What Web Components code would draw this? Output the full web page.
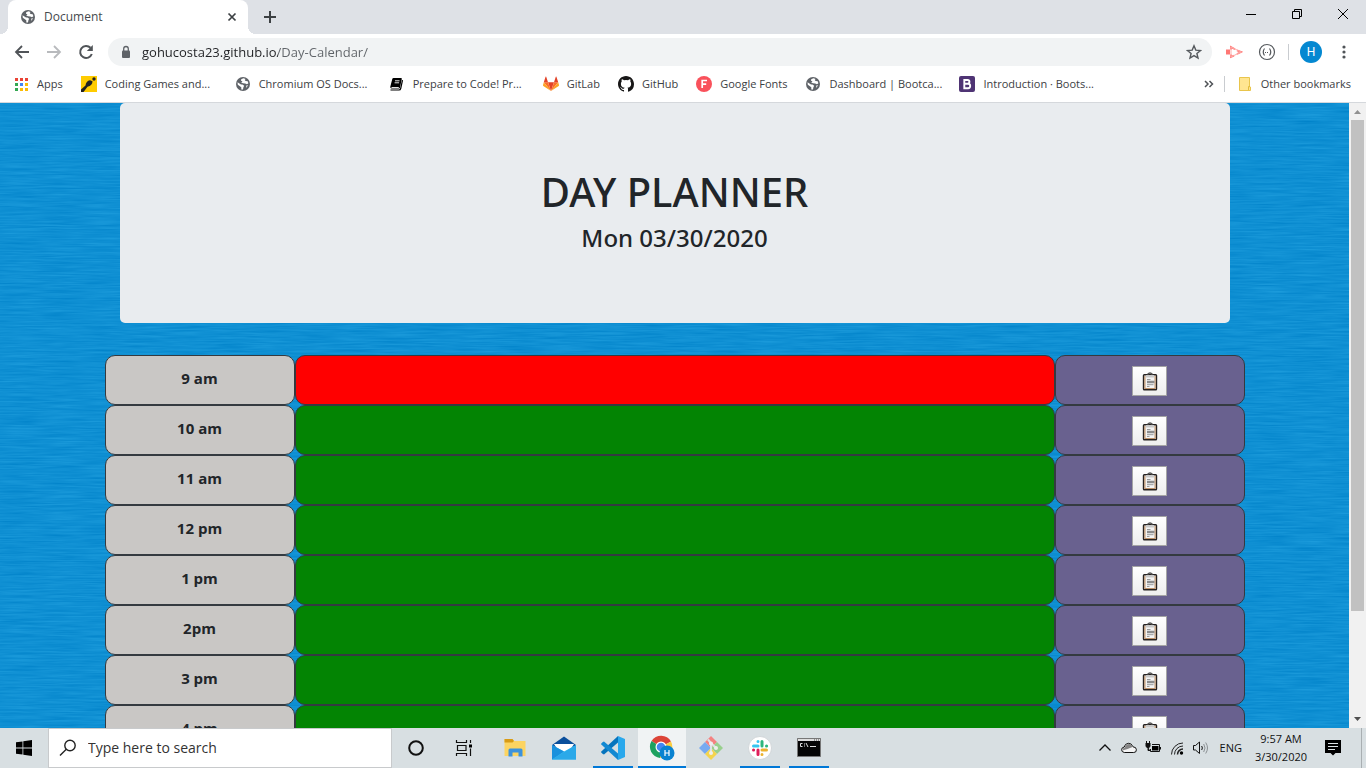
<!DOCTYPE html>
<html lang="en">
<head>
<meta charset="utf-8">
<title>Document</title>
<style>
  html, body { margin: 0; height: 100%; }
  body { font: 12px/16px "Open Sans", "Noto Sans", sans-serif; color: #3c4043; overflow: hidden; }
</style>
</head>
<body>
<desktop-screen></desktop-screen>

<script>
const GLOBE = '<svg width="16" height="16" viewBox="0 0 16 16"><circle cx="8" cy="8" r="7" fill="#5f6368"/><path fill="#fff" d="M2.5 6.3 6 8.6 7.400 8.500 9.200 9.700 8.400 11.200 8 13.500 6.300 13.400 6.300 11.300 2.800 8.700ZM6.200 3.300 8.500 2.300 10.600 2.900 9.700 4 10.600 5 12.700 5.200 13.400 7.300 12 8.300 10.200 7.400 8 7.300 6.200 6.600 7.500 5.300 6 4.700ZM11.300 9.600 13 9.300 11.300 12Z"/></svg>';

const ICONS = {
  globe: GLOBE,
  apps: '<svg width="16" height="16" viewBox="0 0 16 16"><g><path fill="#ea4335" d="M2 2h3v3H2zM7 2h3v3H7zM12 2h3v3h-3z"/><path fill="#34a853" d="M2 7h3v3H2zM2 12h3v3H2z"/><path fill="#4285f4" d="M7 7h3v3H7z"/><path fill="#fbbc05" d="M12 7h3v3h-3zM7 12h3v3H7zM12 12h3v3h-3z"/></g></svg>',
  coding: '<svg width="16" height="16" viewBox="0 0 16 16"><path fill="#fc0" d="M0 0h16v16H0z"/><path fill="#222" d="M0 16V13.500L4.500 9.500Q5 5 9 4.300L11.500 5.200Q11.500 9.500 6.500 10.800L2.500 16z"/><circle cx="13" cy="3" r="1.700" fill="#222"/></svg>',
  book: '<svg width="16" height="16" viewBox="0 0 16 16"><path d="M4.500 2H12q1 0 .8 1L11 11.500q-.2 1-1.200 1H2.500q-1.500 0-1.200-1.800L3.200 3.200Q3.500 2 4.500 2Z"/><path d="M13.500 4.200 11.700 12.500q-.3 1.500-1.700 1.500H1.500" fill="none" stroke="#000" stroke-width="1.200"/><path d="M6 4.800h4.500M5.600 6.800h4.500" fill="none" stroke="#fff" stroke-width=".9"/><path d="M2.500 11.500h7.300" stroke="#fff" stroke-width=".9"/></svg>',
  gitlab: '<svg width="16" height="16" viewBox="0 0 16 16"><path fill="#e24329" d="m8 15 3-8.700H5z"/><path fill="#fc6d26" d="M8 15 5 6.300H.8zM8 15l3-8.700h4.200z"/><path fill="#fca326" d="M.8 6.300 0 9q-.1.600.3.900L8 15zM15.200 6.300 16 9q.1.600-.3.900L8 15z"/><path fill="#e24329" d="M.8 6.300H5L3.200.8q-.3-.5-.6 0zM15.200 6.300H11L12.800.8q.3-.5.600 0z"/></svg>',
  github: '<svg width="16" height="16" viewBox="0 0 16 16"><path fill="#181717" d="M8 0C3.580 0 0 3.580 0 8c0 3.540 2.290 6.530 5.470 7.590.4.070.55-.17.550-.38v-1.330c-2.230.48-2.700-1.070-2.700-1.070-.36-.92-.89-1.170-.89-1.170-.73-.5.060-.49.060-.49.800.060 1.230.83 1.230.83.710 1.220 1.870.87 2.330.67.070-.52.280-.87.510-1.070-1.780-.2-3.640-.89-3.640-3.950 0-.87.310-1.590.82-2.150-.08-.2-.36-1.020.08-2.120 0 0 .67-.21 2.200.82a7.600 7.600 0 0 1 4 0c1.530-1.040 2.200-.82 2.200-.82.440 1.100.16 1.920.08 2.120.51.560.82 1.270.82 2.150 0 3.070-1.870 3.750-3.650 3.950.29.250.54.730.54 1.480v2.190c0 .21.150.46.550.38A8 8 0 0 0 16 8c0-4.420-3.580-8-8-8Z"/></svg>',
  fonts: '<svg width="16" height="16" viewBox="0 0 16 16"><circle cx="8" cy="8" r="8" fill="#f9515b"/><path d="M6.200 12V4.500H11M6.200 8.100h4" fill="none" stroke="#fff" stroke-width="1.700"/></svg>',
  boot: '<svg width="16" height="16" viewBox="0 0 16 16"><rect width="16" height="16" rx="2" fill="#4f3474"/><path d="M5.300 4H8.600Q10.400 4 10.400 5.800T8.600 7.700H5.300H9Q11.200 7.700 11.200 9.900T9 12.200H5.300Z" fill="none" stroke="#fff" stroke-width="1.900"/></svg>',
  folder: '<svg width="16" height="16" viewBox="0 0 16 16"><path d="M2.500 1.500h10v9.500h1v3.500h-11z" fill="#ffe591" stroke="#e9c54c"/><path d="M11.500 14v-3.500h1.500" fill="none" stroke="#e3bd3d"/></svg>',
  start: '<svg width="16" height="16" viewBox="0 0 16 16"><path d="M0 2.300 6.500 1.400V7.600H0zM7.300 1.300 16 0v7.600H7.300zM0 8.400h6.500v6.200L0 13.700zM7.300 8.400H16V16l-8.700-1.300z"/></svg>',
  search: '<svg width="18" height="18" viewBox="0 0 18 18"><g fill="none" stroke="#222" stroke-width="1.400"><circle cx="11" cy="6.500" r="5.200"/><path d="M7.300 10.200 1 16.500"/></g></svg>',
  cortana: '<svg width="24" height="24" viewBox="0 0 24 24"><circle cx="12" cy="12" r="6.800" fill="none" stroke="#111" stroke-width="2"/></svg>',
  taskview: '<svg width="24" height="24" viewBox="0 0 24 24"><path d="M4.500 4v2.500h10V4M4.500 20v-2.500h10V20M5.500 9.500h8.500v5H5.500zM18.500 4v3M18.500 12.500V20" fill="none" stroke="#111" stroke-width="1.200"/><path d="M17 8.500h3v3h-3z"/></svg>',
  explorer: '<svg width="24" height="24" viewBox="0 0 24 24"><path d="M1.500 3h8l1.500 2h11.500v15h-21z" fill="#fcd462"/><path d="M1.500 3h8l1.500 2-1.500 1.500h-8z" fill="#d89b16"/><path d="M5.500 20.500V14q0-1.500 1.500-1.500h11q1.500 0 1.500 1.500v6.500h-4v-4h-6v4z" fill="#3d92dc"/></svg>',
  mail: '<svg width="26" height="26" viewBox="0 0 26 26"><path d="M1 10 13 1.500 25 10v3H1z" fill="#0a4f9c"/><path d="M3 9h20l-5 8H8z" fill="#fff"/><path d="M1 10 13 16.500 25 10v14.500H1z" fill="#35b8f1"/><path d="M1 10 13 16.500 1 24.500z" fill="#1a91dd"/><path d="M1 24.500 25 10v14.500z" fill="#2ba9e9"/></svg>',
  vscode: '<svg width="24" height="24" viewBox="0 0 24 24"><path d="m17 0 7 3v18l-7 3z" fill="#29a8ec"/><path d="M17 0v6.500L3 18.500 1.800 18l-1.500-1.400q-.5-.6 0-1.100z" fill="#0674bd"/><path d="M17 24v-6.500L3 5.500 1.800 6 .3 7.400q-.5.600 0 1.100z" fill="#1389d2"/></svg>',
  chrome: '<svg width="28" height="28" viewBox="0 0 28 28"><path d="M13 13 3.500 7A11.300 11.300 0 0 1 23 7.500z" fill="#dc4437"/><path d="M13 13 3.500 7A11.300 11.300 0 0 0 12 24z" fill="#1da15f"/><path d="M13 13l10-5.500A11.300 11.300 0 0 1 12 24z" fill="#fccd41"/><circle cx="13" cy="13" r="5.500" fill="#fff"/><circle cx="13" cy="13" r="4.300" fill="#4586f0"/><circle cx="19" cy="19" r="7.500" fill="#0a83d1"/><path d="M17 16v6M21 16v6M17 19h4" stroke="#fff" stroke-width="1.200"/></svg>',
  git: '<svg width="26" height="26" viewBox="0 0 26 26"><path d="m13 1 6 6-6 6-6-6z" fill="#f48281"/><path d="m7 7 6 6-6 6-6-6z" fill="#77aaf0"/><path d="m19 7 6 6-6 6-6-6z" fill="#98d08d"/><path d="m13 13 6 6-6 6-6-6z" fill="#f4d44d"/><path d="M10 4.500 13 8v10M13 8l5 5" fill="none" stroke="#dfe3e6" stroke-width="2"/><circle cx="13" cy="8.500" r="2" fill="#eee"/><circle cx="18" cy="13" r="2" fill="#eee"/><circle cx="13" cy="18" r="2" fill="#eee"/></svg>',
  slack: '<svg width="24" height="24" viewBox="0 0 24 24"><circle cx="12" cy="12" r="11.500" fill="#fff" stroke="#c9cdd0" stroke-width=".7"/><g fill="none" stroke-width="3" stroke-linecap="round"><path d="M10 5.500v.1M5.500 10H10" stroke="#36c5f0"/><path d="M14 5.500V10M18.500 10h.1" stroke="#2eb67d"/><path d="M14 14h4.500M14 18.500v.1" stroke="#ecb22e"/><path d="M10 14v4.500M5.500 14h.1" stroke="#e01e5a"/></g></svg>',
  cmd: '<svg width="24" height="24" viewBox="0 0 24 24"><path d="M.5 2.500h23v18H.5z" fill="#050505" stroke="#777"/><path d="M1 3h22v2H1z" fill="#ddd"/><path d="M17 4h1M19 4h1M21 4h1" stroke="#444"/><path d="M5.500 7.500H3.500v3h2M7.500 7.500v1M7.500 9.500v1M9 7l2 4M13 10.500h6" fill="none" stroke="#ddd"/></svg>',
  chevron: '<svg width="16" height="16" viewBox="0 0 16 16"><path d="m2.500 10.500 5.500-5.500 5.500 5.500" fill="none" stroke="#111" stroke-width="1.300"/></svg>',
  cloud: '<svg width="16" height="16" viewBox="0 0 16 16"><path d="M3.300 12.500Q.6 12 .6 9.700T3.200 7Q4 3.600 7.300 3.300T12 6.800Q15.400 7 15.400 9.800T12.700 12.500z" fill="#f4f4f4" stroke="#111"/><path d="M1.300 10.500Q1.500 8 3.700 7.500 5 4 8 4t3.500 3L6.500 9z" fill="#858585"/></svg>',
  battery: '<svg width="16" height="16" viewBox="0 0 16 16"><path d="M7 4.500h7.500v7h-9V9M15.500 7v2.500" fill="none" stroke="#111"/><path d="M7 6h6.500v4.500H7z"/><path d="M.500 3.500h5M1.500 1v2.500M4.500 1v2.500M1 4v2q0 1.500 2 1.500T5 6V4zM3 7v3.500h2" stroke="#111" fill="#111"/></svg>',
  wifi: '<svg width="16" height="16" viewBox="0 0 16 16"><g fill="none" stroke="#222"><path d="M2.500 14.500A11.500 11.500 0 0 1 14 3"/><path d="M5.500 14.500A8.500 8.500 0 0 1 14 6"/><path d="M8.500 14.500A5.500 5.500 0 0 1 14 9" stroke-width="1.500"/></g><circle cx="12.500" cy="13" r="1.700"/></svg>',
  speaker: '<svg width="16" height="16" viewBox="0 0 16 16"><g fill="none" stroke="#111"><path d="M.5 5.500h2l4-3.500v11.500l-4-3.500h-2z"/><path d="M8.700 6q1.300 2 0 4"/><path d="M10.700 4q2.600 4 0 8M12.700 2.500q3.600 5.500 0 11" stroke="#8b9093"/></g></svg>',
  note: '<svg width="16" height="16" viewBox="0 0 16 16"><path d="M0 0h16v13H10.500L8 15.500 5.500 13H0z"/><path d="M3 3.500h10M3 6.500h10M3 9.500h7" stroke="#dde2e5"/></svg>'
};

function define(name, markup, setup) {
  const tpl = document.createElement('template');
  tpl.innerHTML = markup;
  customElements.define(name, class extends HTMLElement {
    constructor() {
      super();
      this.attachShadow({ mode: 'open' }).append(tpl.content.cloneNode(true));
    }
    connectedCallback() { if (setup) setup(this, this.shadowRoot); }
  });
}

define('ui-icon', `<style>:host{display:inline-flex;flex:none}svg{display:block}</style>`, (el, root) => {
  if (!root.querySelector('svg')) root.innerHTML += ICONS[el.getAttribute('name')];
});

define('tab-strip', `<style>
  :host{display:flex;align-items:flex-end;height:34px;background:#dee1e6;padding-left:8px}
  .tab{position:relative;display:flex;align-items:center;gap:8px;box-sizing:border-box;width:240px;height:34px;padding:0 8px 0 12px;background:#fff;border-radius:8px 8px 0 0;color:#45494d}
  .tab::before,.tab::after{content:"";position:absolute;bottom:0;width:8px;height:8px}
  .tab::before{left:-8px;background:radial-gradient(circle at 0 0,transparent 8px,#fff 8px)}
  .tab::after{right:-8px;background:radial-gradient(circle at 100% 0,transparent 8px,#fff 8px)}
  .title{flex:1}
  button{border:0;padding:0;background:none;display:flex;align-items:center;justify-content:center}
  .close{width:16px;height:16px}
  .new{width:28px;height:34px;margin-left:8px}
  .win{display:flex;margin-left:auto;height:34px}
  .win button{width:46px;height:28px}
</style>
<div class="tab"><ui-icon name="globe"></ui-icon><span class="title">Document</span>
<button class="close" aria-label="Close tab"><svg width="16" height="16"><path d="m4.500 4.500 7 7m0-7-7 7" stroke="#3c4043" stroke-width="1.700"/></svg></button></div>
<button class="new" aria-label="New tab"><svg width="14" height="14"><path d="M7 1v12M1 7h12" stroke="#3c4043" stroke-width="2"/></svg></button>
<div class="win">
<button aria-label="Minimize"><svg width="10" height="10"><path d="M0 5.500h10" stroke="#000"/></svg></button>
<button aria-label="Restore"><svg width="10" height="10"><path d="M.5 2.500h7v7h-7zM2.500 2.500v-2h7v7h-2" fill="none" stroke="#000"/></svg></button>
<button aria-label="Close"><svg width="10" height="10"><path d="m0 0 10 10M10 0 0 10" stroke="#000"/></svg></button>
</div>`);

define('tool-bar', `<style>
  :host{display:flex;align-items:center;height:36px;background:#fff;padding:0 14px 0 10px}
  button{border:0;padding:0;background:none;display:flex;align-items:center;justify-content:center;width:24px;height:24px;flex:none}
  .nav{display:flex;gap:8px;margin-right:10px}
  .box{flex:1;display:flex;align-items:center;height:28px;border-radius:14px;background:#f1f3f4;padding:0 6px 0 12px}
  input{flex:1;border:0;outline:0;padding:0;margin-left:10px;height:24px;font:13px/24px "Open Sans","Noto Sans",sans-serif;color:#5f6368;
    background:linear-gradient(to right,#202124 136px,#5f6368 136px);-webkit-background-clip:text;background-clip:text;-webkit-text-fill-color:transparent}
  .ext{display:flex;align-items:center;gap:9px;margin-left:10px}
  .sep{width:1px;height:16px;background:#c9ccd0}
  .me{width:22px;height:22px;border-radius:50%;background:#0488d1;color:#fff;font:12px/22px Roboto,sans-serif;margin-left:2px}
  .menu{width:16px;margin-left:5px}
</style>
<div class="nav">
<button aria-label="Back"><svg width="16" height="16"><path d="M15 8H2m6-6L2 8l6 6" fill="none" stroke="#505458" stroke-width="1.800"/></svg></button>
<button aria-label="Forward"><svg width="16" height="16"><path d="M1 8h13M8 2l6 6-6 6" fill="none" stroke="#b8babd" stroke-width="1.800"/></svg></button>
<button aria-label="Reload"><svg width="16" height="16"><path d="M13.800 10A6 6 0 1 1 12.500 3.800" fill="none" stroke="#505458" stroke-width="2"/><path d="M14.800 1v6h-6z" fill="#505458"/></svg></button>
</div>
<div class="box">
<svg width="12" height="14"><path d="M3 5.500h6q1 0 1 1V12q0 1-1 1H3q-1 0-1-1V6.500q0-1 1-1z" fill="#5f6368"/><path d="M3.700 6V3.800a2.300 2.300 0 0 1 4.600 0V6" fill="none" stroke="#5f6368" stroke-width="1.300"/></svg>
<input aria-label="Address" value="gohucosta23.github.io/Day-Calendar/">
<button aria-label="Bookmark this page"><svg width="16" height="16"><path d="m8 1.800 1.800 4.300 4.700.4-3.600 3 1.100 4.600L8 11.600l-4 2.500 1.100-4.600-3.600-3 4.700-.4z" fill="none" stroke="#55595d" stroke-width="1.400"/></svg></button>
</div>
<div class="ext">
<button aria-label="Screencastify"><svg width="18" height="14"><path d="M1 4.500h4v5H1z" fill="#ff7774"/><path d="M6 9.500V12L9 10.700M6 4.500V2l4 2.200M12 5.300 16 7l-4 2" fill="none" stroke="#ff7774" stroke-width="1.800"/><path d="M6 2v10l10-5z" fill="none" stroke="#ffaaa8"/></svg></button>
<button aria-label="JSON viewer"><svg width="18" height="18"><circle cx="9" cy="9" r="7.500" fill="none" stroke="#55595d" stroke-width="1.200"/><path d="M6.500 5.500Q4 9 6.500 12.500M11.500 5.500Q14 9 11.500 12.500M7 9.500h1m1 0h1" fill="none" stroke="#55595d" stroke-width="1.200"/></svg></button>
<span class="sep"></span>
<button class="me" aria-label="Profile">H</button>
<button class="menu" aria-label="Menu"><svg width="4" height="16"><g fill="#505458"><circle cx="2" cy="3" r="1.600"/><circle cx="2" cy="8" r="1.600"/><circle cx="2" cy="13" r="1.600"/></g></svg></button>
</div>`);

define('bookmark-link', `<style>
  :host{display:block;flex:none}
  :host([wide]){width:154px}
  a{display:flex;align-items:center;gap:8px;color:inherit;text-decoration:none;white-space:nowrap}
</style><a href="#"><span class="icon"></span><span><slot></slot></span></a>`, (el, root) => {
  root.querySelector('.icon').innerHTML = `<ui-icon name="${el.getAttribute('icon')}" style="vertical-align:top"></ui-icon>`;
});

define('bookmark-bar', `<style>
  :host{display:flex;align-items:center;height:28px;background:#fff;padding:0 15px 4px 13px;border-bottom:1px solid #d5d8dc;font-size:11px}
  .short{margin-right:18px}
  .right{display:flex;align-items:center;gap:12px;margin-left:auto}
  button{display:flex;align-items:center;justify-content:center;border:0;padding:0;background:none;width:16px;height:16px;margin-right:-5px}
  .sep{width:1px;height:16px;background:#c9ccd0}
</style>
<bookmark-link class="short" icon="apps">Apps</bookmark-link>
<bookmark-link wide icon="coding">Coding Games and...</bookmark-link>
<bookmark-link wide icon="globe">Chromium OS Docs...</bookmark-link>
<bookmark-link wide icon="book">Prepare to Code! Pr...</bookmark-link>
<bookmark-link class="short" icon="gitlab">GitLab</bookmark-link>
<bookmark-link class="short" icon="github">GitHub</bookmark-link>
<bookmark-link class="short" icon="fonts">Google Fonts</bookmark-link>
<bookmark-link wide icon="globe">Dashboard | Bootca...</bookmark-link>
<bookmark-link wide icon="boot">Introduction · Boots...</bookmark-link>
<div class="right"><button aria-label="More bookmarks"><svg width="10" height="8"><path d="m1 1 3 3-3 3M5.500 1l3 3-3 3" fill="none" stroke="#505458" stroke-width="1.500"/></svg></button><span class="sep"></span>
<bookmark-link icon="folder">Other bookmarks</bookmark-link></div>`);

define('time-row', `<style>
  :host{display:grid;grid-template-columns:2fr 8fr 2fr;height:50px}
  label,input,.save{box-sizing:border-box;border:1px solid #343a40;border-radius:10px;min-width:0}
  label{background:#c9c7c5;color:#212529;font-size:15px;line-height:24px;font-weight:700;text-align:center;padding-top:10px}
  input{width:100%;height:100%;background:#038403;color:#fff;padding:0 12px;font:inherit;outline:0}
  :host([now]) input{background:#f00}
  .save{background:#69618f;display:flex;align-items:center;justify-content:center;padding-top:2px}
  button{box-sizing:border-box;width:35px;height:30px;padding:0;border:1px solid #a5a5a5;background:linear-gradient(#fff,#eee);display:flex;align-items:center;justify-content:center}
</style>
<label for="task"><slot></slot></label><input id="task">
<div class="save"><button aria-label="Save"><svg width="16" height="19" viewBox="0 0 16 19"><rect x="1.500" y="2.800" width="13" height="15" rx=".8" fill="#f4f4f4" stroke="#272220" stroke-width="1.400"/><path d="M2.900 4v12.500h10.200V4" fill="none" stroke="#bf936a" stroke-width="1.200"/><path d="M4 3h8v2.500H4z" fill="#c8c8c8"/><path d="M5.500 2.500Q8-.5 10.500 2.500" fill="none" stroke="#555" stroke-width="1.400"/><path d="M5 7.500h3.500M5 14.500h2.500" stroke="#999"/><path d="M5 10h7.500" stroke="#8c8c8c" stroke-width="2.500"/><path d="M5 12.700h6.500" stroke="#999"/></svg></button></div>`);

define('day-planner', `<style>
  :host{display:block;position:relative;flex:1;min-width:0;overflow:hidden;background:#0f90d3}
  .grain{position:absolute;inset:0;width:100%;height:100%}
  main{position:relative;max-width:1140px;margin:0 auto}
  header{box-sizing:border-box;margin:0 15px 32px;padding:65px 32px 63px;background:#e9ecef;border-radius:5px;text-align:center;color:#212529}
  h1,h2{margin:0 0 8px;font-family:"Noto Sans","Open Sans",sans-serif;font-weight:500}
  h1{font-size:40px;line-height:48px}
  h2{font-size:24px;line-height:28px}
</style>
<svg class="grain" aria-hidden="true"><filter id="g" x="0" y="0" width="100%" height="100%" color-interpolation-filters="sRGB"><feTurbulence type="fractalNoise" baseFrequency=".024 .6" numOctaves="3" seed="8"/><feColorMatrix values=".12 0 0 0 0  .11 0 0 0 .508  .08 0 0 0 .787  0 0 0 0 1"/></filter><rect width="100%" height="100%" filter="url(#g)"/></svg>
<main><header><h1>DAY PLANNER</h1><h2>Mon 03/30/2020</h2></header>
<time-row now>9 am</time-row><time-row>10 am</time-row><time-row>11 am</time-row><time-row>12 pm</time-row><time-row>1 pm</time-row><time-row>2pm</time-row><time-row>3 pm</time-row><time-row>4 pm</time-row></main>`);

define('scroll-rail', `<style>
  :host{display:flex;flex-direction:column;width:17px;background:#f1f1f1;flex:none}
  svg{display:block;flex:none}
  .track{flex:1;padding:0 2px}
  .thumb{height:83%;background:#c1c1c1}
</style><svg width="17" height="17"><path d="M5 11h7L8.500 7z" fill="#909090"/></svg><div class="track"><div class="thumb"></div></div><svg width="17" height="17"><path d="M5 6h7l-3.500 4z" fill="#505050"/></svg>`);

define('task-button', `<style>
  :host{display:block;flex:none;width:48px;height:40px}
  button{position:relative;width:100%;height:100%;border:0;padding:0;background:none;display:flex;align-items:center;justify-content:center}
  :host([open]) button::after{content:"";position:absolute;bottom:0;left:4px;right:4px;height:2px;background:#0078d7}
  :host([active]) button{background:#f0f3f4}
  :host([active]) button::after{left:0;right:0}
</style><button></button>`, (el, root) => {
  const b = root.querySelector('button');
  b.setAttribute('aria-label', el.getAttribute('label'));
  b.innerHTML = `<ui-icon name="${el.getAttribute('icon')}"></ui-icon>`;
});

define('task-bar', `<style>
  :host{display:flex;height:40px;background:#d8dfe2;color:#111;flex:none;font-size:11px}
  .search{box-sizing:border-box;display:flex;align-items:center;gap:11px;width:344px;height:40px;padding:0 10px;background:#fff;border:1px solid #c8cacc}
  input{flex:1;min-width:0;border:0;padding:0;outline:0;background:none;font:14px/20px "Open Sans","Noto Sans",sans-serif}
  input::placeholder{color:#333;opacity:1}
  .apps{display:flex;gap:1px;margin-left:3px}
  .tray{display:flex;align-items:center;gap:8px;margin-left:auto}
  .lang{margin-left:3px}
  .clock{width:62px;line-height:18px;text-align:center}
  .note{display:flex;border:0;padding:0;background:none;margin:0 12px 0 5px}
  .desk{width:4px;height:40px;border-left:1px solid #a9afb2}
</style>
<task-button icon="start" label="Start"></task-button>
<label class="search"><ui-icon name="search"></ui-icon><input placeholder="Type here to search" aria-label="Search"></label>
<task-button icon="cortana" label="Cortana"></task-button><task-button icon="taskview" label="Task View"></task-button>
<div class="apps">
<task-button icon="explorer" label="File Explorer"></task-button><task-button icon="mail" label="Mail"></task-button><task-button open icon="vscode" label="Visual Studio Code"></task-button><task-button open active icon="chrome" label="Chrome"></task-button><task-button icon="git" label="Git"></task-button><task-button open icon="slack" label="Slack"></task-button><task-button open icon="cmd" label="Command Prompt"></task-button></div>
<div class="tray"><ui-icon name="chevron"></ui-icon><ui-icon name="cloud"></ui-icon><ui-icon name="battery"></ui-icon><ui-icon name="wifi"></ui-icon><ui-icon name="speaker"></ui-icon><span class="lang">ENG</span><div class="clock">9:57 AM<br>3/30/2020</div><button class="note" aria-label="Notifications"><ui-icon name="note"></ui-icon></button><span class="desk"></span></div>`);

define('desktop-screen', `<style>
  :host{display:flex;flex-direction:column;height:100vh}
  .view{display:flex;flex:1;min-height:0}
</style>
<tab-strip></tab-strip><tool-bar></tool-bar><bookmark-bar></bookmark-bar>
<div class="view"><day-planner></day-planner><scroll-rail></scroll-rail></div>
<task-bar></task-bar>`);
</script>
</body>
</html>
